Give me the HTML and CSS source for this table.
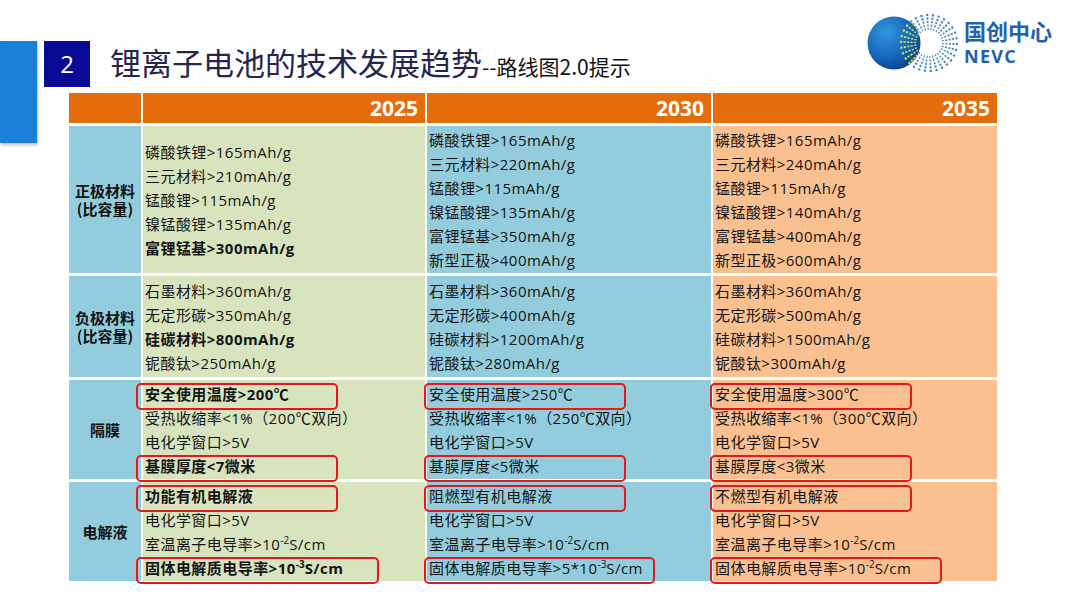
FILE: index.html
```html
<!DOCTYPE html>
<html lang="zh">
<head>
<meta charset="utf-8">
<title>锂离子电池的技术发展趋势</title>
<link rel="stylesheet" href="styles.css">
</head>
<body>
<div class="page">
  <div class="side"><div class="stripe"></div></div>
  <div class="main">
    <header class="top">
      <div class="heading">
        <div class="num">2</div>
        <h1 class="title">锂离子电池的技术发展趋势<span class="sub">--路线图2.0提示</span></h1>
      </div>
      <div class="brand">
        <svg class="mark" width="98" height="62" viewBox="0 0 98 62">
          <defs>
            <radialGradient id="ball" cx="0.35" cy="0.3" r="0.8">
              <stop offset="0" stop-color="#3296e0"/>
              <stop offset="0.6" stop-color="#1565b8"/>
              <stop offset="1" stop-color="#0a3a88"/>
            </radialGradient>
            <clipPath id="ballclip"><circle cx="33" cy="31" r="26.5"/></clipPath>
          </defs>
          <circle cx="33" cy="31" r="26.5" fill="url(#ball)"/>
          <g class="ring" fill="none" stroke="#3f86c4" stroke-width="2.1">
            <circle cx="68" cy="31" r="14" pathLength="360" stroke-dasharray="4.6 7.4"/>
            <circle cx="68" cy="31" r="17.5" pathLength="360" stroke-dasharray="4.6 7.4"/>
            <circle cx="68" cy="31" r="21" pathLength="360" stroke-dasharray="4.6 7.4"/>
            <circle cx="68" cy="31" r="24.5" pathLength="360" stroke-dasharray="4.6 7.4"/>
            <circle cx="68" cy="31" r="28" pathLength="360" stroke-dasharray="4.6 7.4"/>
          </g>
          <g clip-path="url(#ballclip)" fill="none" stroke="#c9dc52" stroke-width="2.1">
            <circle cx="68" cy="31" r="14" pathLength="360" stroke-dasharray="4.6 7.4"/>
            <circle cx="68" cy="31" r="17.5" pathLength="360" stroke-dasharray="4.6 7.4"/>
            <circle cx="68" cy="31" r="21" pathLength="360" stroke-dasharray="4.6 7.4"/>
            <circle cx="68" cy="31" r="24.5" pathLength="360" stroke-dasharray="4.6 7.4"/>
            <circle cx="68" cy="31" r="28" pathLength="360" stroke-dasharray="4.6 7.4"/>
          </g>
        </svg>
        <div class="brand-text">
          <div class="cn">国创中心</div>
          <div class="en">NEVC</div>
        </div>
      </div>
    </header>

    <div class="grid">
      <div class="hd"></div>
      <div class="hd yr">2025</div>
      <div class="hd yr">2030</div>
      <div class="hd yr">2035</div>

      <div class="lbl">正极材料<br>(比容量)</div>
      <div class="cell c25">
        <div class="ln">磷酸铁锂&gt;165mAh/g</div>
        <div class="ln">三元材料&gt;210mAh/g</div>
        <div class="ln">锰酸锂&gt;115mAh/g</div>
        <div class="ln">镍锰酸锂&gt;135mAh/g</div>
        <div class="ln b">富锂锰基&gt;300mAh/g</div>
      </div>
      <div class="cell c30">
        <div class="ln">磷酸铁锂&gt;165mAh/g</div>
        <div class="ln">三元材料&gt;220mAh/g</div>
        <div class="ln">锰酸锂&gt;115mAh/g</div>
        <div class="ln">镍锰酸锂&gt;135mAh/g</div>
        <div class="ln">富锂锰基&gt;350mAh/g</div>
        <div class="ln">新型正极&gt;400mAh/g</div>
      </div>
      <div class="cell c35">
        <div class="ln">磷酸铁锂&gt;165mAh/g</div>
        <div class="ln">三元材料&gt;240mAh/g</div>
        <div class="ln">锰酸锂&gt;115mAh/g</div>
        <div class="ln">镍锰酸锂&gt;140mAh/g</div>
        <div class="ln">富锂锰基&gt;400mAh/g</div>
        <div class="ln">新型正极&gt;600mAh/g</div>
      </div>

      <div class="lbl">负极材料<br>(比容量)</div>
      <div class="cell c25">
        <div class="ln">石墨材料&gt;360mAh/g</div>
        <div class="ln">无定形碳&gt;350mAh/g</div>
        <div class="ln b">硅碳材料&gt;800mAh/g</div>
        <div class="ln">铌酸钛&gt;250mAh/g</div>
      </div>
      <div class="cell c30">
        <div class="ln">石墨材料&gt;360mAh/g</div>
        <div class="ln">无定形碳&gt;400mAh/g</div>
        <div class="ln">硅碳材料&gt;1200mAh/g</div>
        <div class="ln">铌酸钛&gt;280mAh/g</div>
      </div>
      <div class="cell c35">
        <div class="ln">石墨材料&gt;360mAh/g</div>
        <div class="ln">无定形碳&gt;500mAh/g</div>
        <div class="ln">硅碳材料&gt;1500mAh/g</div>
        <div class="ln">铌酸钛&gt;300mAh/g</div>
      </div>

      <div class="lbl">隔膜</div>
      <div class="cell c25">
        <div class="ln b hl">安全使用温度&gt;200℃</div>
        <div class="ln">受热收缩率&lt;1%（200℃双向）</div>
        <div class="ln">电化学窗口&gt;5V</div>
        <div class="ln b hl">基膜厚度&lt;7微米</div>
      </div>
      <div class="cell c30">
        <div class="ln hl">安全使用温度&gt;250℃</div>
        <div class="ln">受热收缩率&lt;1%（250℃双向）</div>
        <div class="ln">电化学窗口&gt;5V</div>
        <div class="ln hl">基膜厚度&lt;5微米</div>
      </div>
      <div class="cell c35">
        <div class="ln hl">安全使用温度&gt;300℃</div>
        <div class="ln">受热收缩率&lt;1%（300℃双向）</div>
        <div class="ln">电化学窗口&gt;5V</div>
        <div class="ln hl">基膜厚度&lt;3微米</div>
      </div>

      <div class="lbl">电解液</div>
      <div class="cell c25">
        <div class="ln b hl">功能有机电解液</div>
        <div class="ln">电化学窗口&gt;5V</div>
        <div class="ln">室温离子电导率&gt;10<sup>-2</sup>S/cm</div>
        <div class="ln b hl wide">固体电解质电导率&gt;10<sup>-3</sup>S/cm</div>
      </div>
      <div class="cell c30">
        <div class="ln hl">阻燃型有机电解液</div>
        <div class="ln">电化学窗口&gt;5V</div>
        <div class="ln">室温离子电导率&gt;10<sup>-2</sup>S/cm</div>
        <div class="ln hl wide">固体电解质电导率&gt;5*10<sup>-3</sup>S/cm</div>
      </div>
      <div class="cell c35">
        <div class="ln hl">不燃型有机电解液</div>
        <div class="ln">电化学窗口&gt;5V</div>
        <div class="ln">室温离子电导率&gt;10<sup>-2</sup>S/cm</div>
        <div class="ln hl wide">固体电解质电导率&gt;10<sup>-2</sup>S/cm</div>
      </div>
    </div>
  </div>
</div>
</body>
</html>
```

FILE: styles.css
```css
* { box-sizing: border-box; }

html, body {
  margin: 0;
  padding: 0;
  background: #ffffff;
}

body {
  width: 1080px;
  height: 608px;
  overflow: hidden;
  font-family: "Open Sans", "Noto Sans CJK SC", sans-serif;
  color: #141414;
}

.page {
  display: flex;
  width: 1080px;
  height: 608px;
}

.side {
  width: 37px;
  flex: none;
}

.stripe {
  margin-top: 41px;
  height: 102px;
  background: #1a80d8;
  box-shadow: 1px 2px 3px rgba(0, 0, 0, 0.25);
}

.main {
  flex: 1;
  display: flex;
  flex-direction: column;
}

/* ---------- header ---------- */
.top {
  height: 93px;
  display: flex;
  justify-content: space-between;
  align-items: flex-start;
  padding-right: 28px;
}

.heading {
  margin-top: 41px;
  margin-left: 7px;
  height: 46px;
  display: flex;
  align-items: center;
}

.num {
  width: 46px;
  height: 46px;
  background: #0a0a96;
  color: #ffffff;
  font-family: "Open Sans", "Noto Sans CJK SC", sans-serif;
  font-size: 24px;
  line-height: 46px;
  text-align: center;
}

.title {
  margin: 0 0 0 20px;
  font-family: "Noto Sans CJK SC", sans-serif;
  font-weight: 400;
  font-size: 31px;
  line-height: 46px;
  color: #25254e;
  white-space: nowrap;
}

.sub {
  font-size: 21px;
  color: #111111;
}

.brand {
  margin-top: 12px;
  display: flex;
  align-items: flex-start;
  gap: 5px;
}

.mark { display: block; }

.brand-text {
  margin-top: 5px;
  color: #2161ad;
  font-weight: 700;
}

.cn {
  font-family: "Noto Sans CJK SC", sans-serif;
  font-size: 22px;
  line-height: 26px;
}

.en {
  margin-top: 2px;
  font-family: "Open Sans", "Noto Sans", sans-serif;
  font-size: 18px;
  line-height: 22px;
  letter-spacing: 1.3px;
}

/* ---------- table ---------- */
.grid {
  margin-left: 32px;
  display: grid;
  grid-template-columns: 72px 282px 284px 284px;
  grid-template-rows: 30px 147px 101px 99px 99px;
  column-gap: 2px;
  row-gap: 3px;
}

.hd {
  background: #e46c0a;
}

.yr {
  color: #ffffff;
  font-weight: 700;
  font-size: 21px;
  line-height: 30px;
  text-align: right;
  padding-right: 7px;
}

.lbl {
  background: #93cddd;
  display: flex;
  align-items: center;
  justify-content: center;
  text-align: center;
  font-family: "Noto Sans CJK SC", sans-serif;
  font-weight: 700;
  font-size: 15px;
  line-height: 18px;
  color: #111111;
}

.cell {
  display: flex;
  flex-direction: column;
  justify-content: center;
  padding-left: 2px;
  font-size: 15px;
  line-height: 24px;
  letter-spacing: 0.45px;
}

.c25 { background: #d7e4bd; }
.c30 { background: #93cddd; }
.c35 { background: #fac090; }

.ln {
  white-space: nowrap;
}

.b { font-weight: 700; }

sup {
  font-size: 10px;
  line-height: 0;
  vertical-align: 6px;
  letter-spacing: 0;
}

/* red highlight frames lying over the cell text */
.hl { position: relative; }

.hl::after {
  content: "";
  position: absolute;
  top: 1px;
  height: 23px;
  left: -5px;
  width: 198px;
  border: 2.5px solid #e3191e;
  border-radius: 5px;
}

.c25 .hl::after { left: -9px; }
.c25 .wide::after { width: 239px; }
.c30 .wide::after { width: 227px; }
.c35 .wide::after { width: 228px; }
```
